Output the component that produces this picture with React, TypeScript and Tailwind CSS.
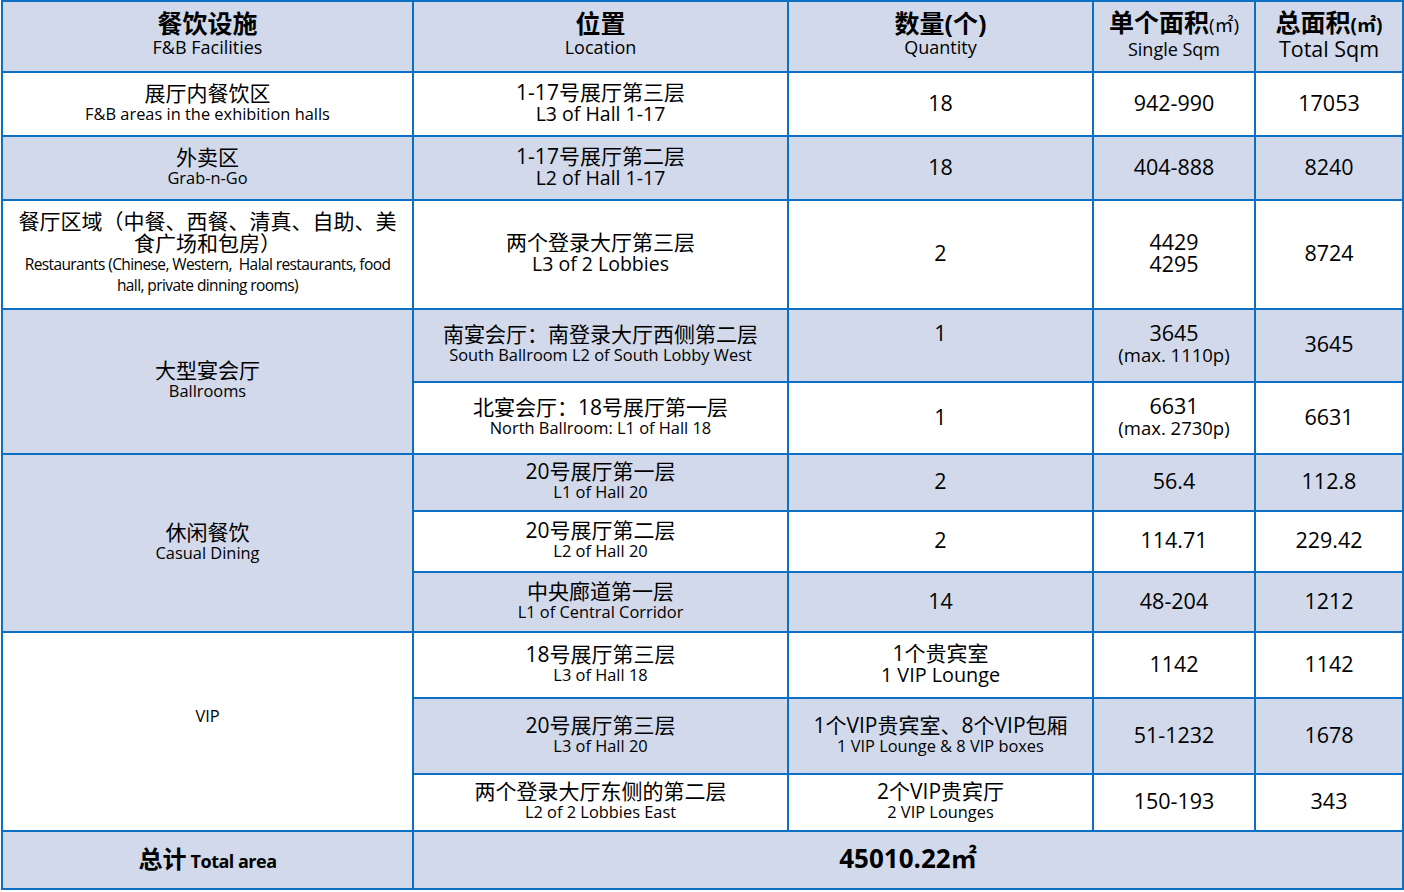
import React from "react";

const blue = "bg-[#d1d9ea]";
const cell = "border-2 border-[#0b6fc4] text-center align-middle px-0 pt-0 pb-[3px]";

const Cn = ({ children, bold }: { children: React.ReactNode; bold?: boolean }) => (
  <div className={`text-[21px] leading-[22px] text-black ${bold ? "font-bold" : ""}`}>{children}</div>
);
const En = ({ children, big }: { children: React.ReactNode; big?: boolean }) => (
  <div className={`${big ? "text-[19.5px] leading-[22px]" : "text-[16.4px] leading-[20px]"} text-black`}>{children}</div>
);
const Num = ({ children }: { children: React.ReactNode }) => (
  <div className="text-[21.5px] leading-[22px] text-black">{children}</div>
);
const Max = ({ children }: { children: React.ReactNode }) => (
  <div className="text-[18.5px] leading-[22px] text-black">{children}</div>
);

type Row = {
  loc: [string, string];
  big?: boolean;
  qty: React.ReactNode;
  single: React.ReactNode;
  total: string;
  bg: boolean;
};

const Cells = ({ r }: { r: Row }) => (
  <>
    <td className={`${cell} ${r.bg ? blue : "bg-white"}`}>
      <Cn>{r.loc[0]}</Cn>
      <En big={r.big}>{r.loc[1]}</En>
    </td>
    <td className={`${cell} ${r.bg ? blue : "bg-white"}`}>{r.qty}</td>
    <td className={`${cell} ${r.bg ? blue : "bg-white"}`}>{r.single}</td>
    <td className={`${cell} ${r.bg ? blue : "bg-white"}`}>
      <Num>{r.total}</Num>
    </td>
  </>
);

const Head = ({ cn, en, enSize = "text-[18px]" }: { cn: React.ReactNode; en: string; enSize?: string }) => (
  <td className={`${cell} ${blue} !pb-[5px]`}>
    <div className="text-[25px] leading-[26px] font-bold">{cn}</div>
    <div className={`${enSize} leading-[22px]`}>{en}</div>
  </td>
);

export default function App() {
  return (
    <div className="w-[1404px] h-[892px] bg-white font-['Open_Sans','Noto_Sans_CJK_SC',sans-serif]">
      <table className="border-collapse table-fixed w-[1403px] ml-[1px]">
        <colgroup>
          <col className="w-[411px]" />
          <col className="w-[375px]" />
          <col className="w-[305px]" />
          <col className="w-[162px]" />
          <col className="w-[148px]" />
        </colgroup>
        <tbody>
          <tr className="h-[71px]">
            <Head cn="餐饮设施" en="F&B Facilities" />
            <Head cn="位置" en="Location" />
            <Head cn="数量(个)" en="Quantity" />
            <Head
              cn={
                <>
                  单个面积<span className="text-[19px] font-normal">(㎡)</span>
                </>
              }
              en="Single Sqm"
            />
            <Head
              cn={
                <>
                  总面积<span className="text-[19px]">(㎡)</span>
                </>
              }
              en="Total Sqm"
              enSize="text-[21.5px]"
            />
          </tr>

          <tr className="h-[64px]">
            <td className={`${cell} bg-white`}>
              <Cn>展厅内餐饮区</Cn>
              <En>F&amp;B areas in the exhibition halls</En>
            </td>
            <Cells r={{ loc: ["1-17号展厅第三层", "L3 of Hall 1-17"], big: true, qty: <Num>18</Num>, single: <Num>942-990</Num>, total: "17053", bg: false }} />
          </tr>

          <tr className="h-[64px]">
            <td className={`${cell} ${blue}`}>
              <Cn>外卖区</Cn>
              <En>Grab-n-Go</En>
            </td>
            <Cells r={{ loc: ["1-17号展厅第二层", "L2 of Hall 1-17"], big: true, qty: <Num>18</Num>, single: <Num>404-888</Num>, total: "8240", bg: true }} />
          </tr>

          <tr className="h-[109px]">
            <td className={`${cell} bg-white px-[12px]`}>
              <Cn>餐厅区域（中餐、西餐、清真、自助、美食广场和包房）</Cn>
              <div className="text-[15.5px] leading-[21px] tracking-[-0.6px] px-[6px]">
                Restaurants (Chinese, Western,&nbsp; Halal restaurants, food hall, private dinning rooms)
              </div>
            </td>
            <Cells
              r={{
                loc: ["两个登录大厅第三层", "L3 of 2 Lobbies"],
                big: true,
                qty: <Num>2</Num>,
                single: (
                  <>
                    <Num>4429</Num>
                    <Num>4295</Num>
                  </>
                ),
                total: "8724",
                bg: false,
              }}
            />
          </tr>

          <tr className="h-[73px]">
            <td rowSpan={2} className={`${cell} ${blue}`}>
              <Cn>大型宴会厅</Cn>
              <En>Ballrooms</En>
            </td>
            <Cells
              r={{
                loc: ["南宴会厅：南登录大厅西侧第二层", "South Ballroom L2 of South Lobby West"],
                qty: (
                  <div className="pb-[22px]">
                    <Num>1</Num>
                  </div>
                ),
                single: (
                  <>
                    <Num>3645</Num>
                    <Max>(max. 1110p)</Max>
                  </>
                ),
                total: "3645",
                bg: true,
              }}
            />
          </tr>
          <tr className="h-[72px]">
            <Cells
              r={{
                loc: ["北宴会厅：18号展厅第一层", "North Ballroom: L1 of Hall 18"],
                qty: <Num>1</Num>,
                single: (
                  <>
                    <Num>6631</Num>
                    <Max>(max. 2730p)</Max>
                  </>
                ),
                total: "6631",
                bg: false,
              }}
            />
          </tr>

          <tr className="h-[57px]">
            <td rowSpan={3} className={`${cell} ${blue}`}>
              <Cn>休闲餐饮</Cn>
              <En>Casual Dining</En>
            </td>
            <Cells r={{ loc: ["20号展厅第一层", "L1 of Hall 20"], qty: <Num>2</Num>, single: <Num>56.4</Num>, total: "112.8", bg: true }} />
          </tr>
          <tr className="h-[61px]">
            <Cells r={{ loc: ["20号展厅第二层", "L2 of Hall 20"], qty: <Num>2</Num>, single: <Num>114.71</Num>, total: "229.42", bg: false }} />
          </tr>
          <tr className="h-[60px]">
            <Cells r={{ loc: ["中央廊道第一层", "L1 of Central Corridor"], qty: <Num>14</Num>, single: <Num>48-204</Num>, total: "1212", bg: true }} />
          </tr>

          <tr className="h-[66px]">
            <td rowSpan={3} className={`${cell} bg-white`}>
              <div className="text-[16.4px] leading-[20px] pb-[28px]">VIP</div>
            </td>
            <Cells
              r={{
                loc: ["18号展厅第三层", "L3 of Hall 18"],
                qty: (
                  <>
                    <Cn>1个贵宾室</Cn>
                    <div className="text-[19.8px] leading-[22px]">1 VIP Lounge</div>
                  </>
                ),
                single: <Num>1142</Num>,
                total: "1142",
                bg: false,
              }}
            />
          </tr>
          <tr className="h-[76px]">
            <Cells
              r={{
                loc: ["20号展厅第三层", "L3 of Hall 20"],
                qty: (
                  <>
                    <Cn>1个VIP贵宾室、8个VIP包厢</Cn>
                    <En>1 VIP Lounge &amp; 8 VIP boxes</En>
                  </>
                ),
                single: <Num>51-1232</Num>,
                total: "1678",
                bg: true,
              }}
            />
          </tr>
          <tr className="h-[57px]">
            <Cells
              r={{
                loc: ["两个登录大厅东侧的第二层", "L2 of 2 Lobbies East"],
                qty: (
                  <>
                    <Cn>2个VIP贵宾厅</Cn>
                    <En>2 VIP Lounges</En>
                  </>
                ),
                single: <Num>150-193</Num>,
                total: "343",
                bg: false,
              }}
            />
          </tr>

          <tr className="h-[58px]">
            <td className={`${cell} ${blue}`}>
              <span className="text-[24px] font-bold">总计</span>{" "}
              <span className="text-[18px] font-bold tracking-[-0.5px]">Total area</span>
            </td>
            <td colSpan={4} className={`${cell} ${blue}`}>
              <span className="text-[26px] font-bold">45010.22㎡</span>
            </td>
          </tr>
        </tbody>
      </table>
    </div>
  );
}
